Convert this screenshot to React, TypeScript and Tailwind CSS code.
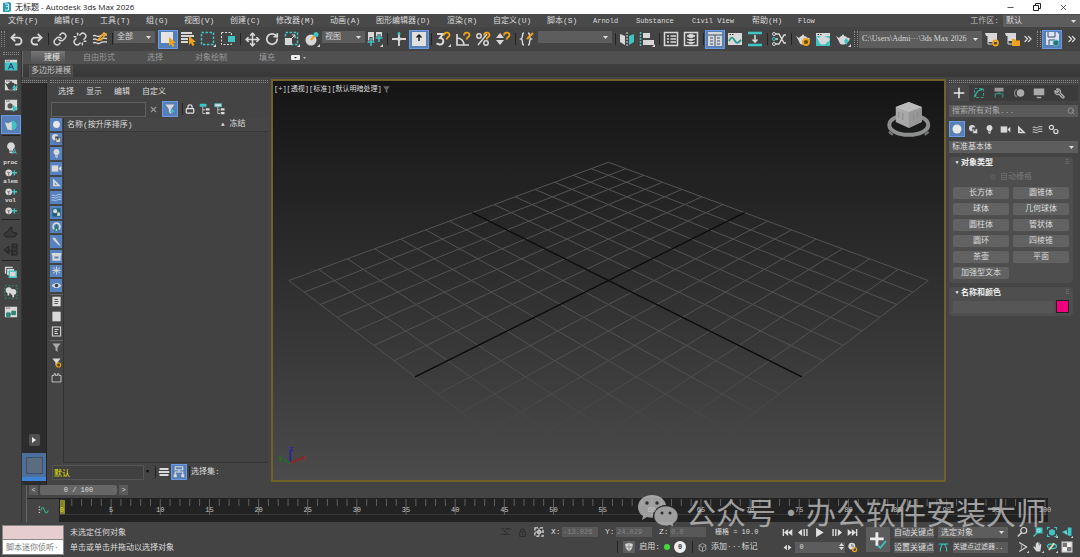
import { useState } from "react";
import type { ReactNode } from "react";
import {
  ChevronsRight,
  Link,
  Lock,
  Minus,
  Move,
  RotateCw,
  Search,
  Undo2,
  Redo2,
  Unlink,
  Wrench,
  X,
} from "lucide-react";
import clsx from "clsx";
import { twMerge } from "tailwind-merge";

const MENUS: [string, string][] = [
  ["文件(F)", "w-[46px]"],
  ["编辑(E)", "w-[46px]"],
  ["工具(T)", "w-[46px]"],
  ["组(G)", "w-[38px]"],
  ["视图(V)", "w-[46px]"],
  ["创建(C)", "w-[46px]"],
  ["修改器(M)", "w-[54px]"],
  ["动画(A)", "w-[46px]"],
  ["图形编辑器(D)", "w-[71px]"],
  ["渲染(R)", "w-[46px]"],
  ["自定义(U)", "w-[54px]"],
  ["脚本(S)", "w-[46px]"],
  ["Arnold", "w-[43px]"],
  ["Substance", "w-[56px]"],
  ["Civil View", "w-[60px]"],
  ["帮助(H)", "w-[46px]"],
  ["Flow", "w-[38px]"],
];

const PRIMITIVES = [
  "长方体", "圆锥体",
  "球体", "几何球体",
  "圆柱体", "管状体",
  "圆环", "四棱锥",
  "茶壶", "平面",
  "加强型文本",
];

const W = "#d8d8d8";
const T = "#3fc4c4";
const O = "#efa31d";

function Icon({ children, size = 16 }: { children: ReactNode; size?: number }) {
  return (
    <svg width={size} height={size} viewBox="0 0 16 16" fill="none" stroke="none" className="shrink-0" aria-hidden="true">
      {children}
    </svg>
  );
}

const Corner = () => <path d="M16 13v3h-3z" fill={W} />;
const Magnet = () => <path d="M9 4.5C9 1 14.5.5 14.5 4c0 2-2.5 2-3 4.5" stroke={O} strokeWidth="1.8" />;
const Teapot = ({ color = W }: { color?: string }) => (
  <path d="M1 5l3 2c1-1.5 2-2 3-2V3.800h2V5c2 0 3 1 3.500 2 2-.5 2.500.5 2 2s-2 2-2.500 2c-1 2-2 2.500-4 2.500S4.500 13 4 10.500z" fill={color} />
);
const Waves = ({ color = W }: { color?: string }) => (
  <path d="M1 5c3-2 4 2 7 0s4-1 7-1M1 8.500c3-2 4 2 7 0s4-1 7-1M1 12c3-2 4 2 7 0s4-1 7-1" stroke={color} strokeWidth="1.300" />
);
const Bulb = () => (
  <path d="M8 1.500a4.300 4.300 0 0 1 2.300 8V11H5.700V9.500a4.300 4.300 0 0 1 2.300-8zM6 12h4v1.500H9l-1 1-1-1H6z" fill={W} />
);
const Camera = () => (
  <>
    <rect x="1" y="3.500" width="9.500" height="9" fill={W} />
    <path d="M11 8l4-4v8.500z" fill={W} />
  </>
);
const Triangle = () => (
  <path d="M3 2v11.500h11.500zM5.500 8l3.300 3.300H5.500z" fill={W} fillRule="evenodd" />
);
const Shapes = () => (
  <>
    <circle cx="6" cy="6" r="4.500" fill={W} />
    <path d="M7 7h7v7H7z" fill={W} stroke="#444" />
    <path d="M6 6h4v4" stroke="#333" strokeWidth="1.500" />
  </>
);
const Window = () => (
  <>
    <path d="M1 2h14v12H1z" fill={W} />
    <path d="M2.500 3.500h1.500M5 3.500h1.500" stroke="#333" />
  </>
);
const Funnel = ({ color = W }: { color?: string }) => <path d="M2 2h12L9.500 8v6.500L6.500 12V8z" fill={color} />;

function ToolButton({
  label,
  active,
  children,
  className,
}: {
  label: string;
  active?: boolean;
  children: ReactNode;
  className?: string;
}) {
  return (
    <button
      type="button"
      aria-label={label}
      className={twMerge(
        "flex h-[19px] w-5 shrink-0 items-center justify-center border border-transparent",
        active && "border-[#6b9ae0] bg-[#5780b8]",
        className
      )}
    >
      {children}
    </button>
  );
}

function Sep() {
  return (
    <div className="flex h-3 w-1 shrink-0 justify-center">
      <div className="w-px bg-[#242424]" />
    </div>
  );
}

function Grip() {
  return <div className="mx-px h-4 w-1 shrink-0 border-x border-dotted border-[#888]" />;
}

function Select({ label, value, className }: { label: string; value: string; className?: string }) {
  return (
    <div className={clsx("relative flex shrink-0 bg-[#5d5d5d]", className)}>
      <select aria-label={label} defaultValue={value} className="w-full appearance-none truncate bg-transparent pr-2 pl-[3px] outline-none">
        <option>{value}</option>
      </select>
      <svg className="pointer-events-none absolute top-1/2 right-1 -mt-px" width="5" height="3" aria-hidden="true">
        <path d="M0 0h5L2.500 3z" fill="#ddd" />
      </svg>
    </div>
  );
}

function TitleBar() {
  return (
    <header className="flex h-[14px] shrink-0 items-center bg-white text-[#222]">
      <svg width="9" height="10" viewBox="0 0 9 10" className="ml-[2px]" aria-hidden="true">
        <path d="M1 1l6-1 2 1v8l-2 1H1z" fill="#2a9bb5" />
        <path d="M3 2h3.500v2.500H4M3 8h3.500V4.500" stroke="#d9f4f8" fill="none" />
      </svg>
      <h1 className="ml-1 font-['Open_Sans','Noto_Sans_CJK_SC',sans-serif] text-[8px]">无标题 - Autodesk 3ds Max 2026</h1>
      <div className="ml-auto flex items-center gap-[18px] pr-3">
        <button type="button" aria-label="最小化"><Minus size={9} strokeWidth={2} /></button>
        <button type="button" aria-label="还原">
          <svg width="8" height="8" fill="none" stroke="#222" aria-hidden="true">
            <path d="M.5 2.500h5v5h-5zM2.500 2V.5h5v5H6" />
          </svg>
        </button>
        <button type="button" aria-label="关闭"><X size={9} strokeWidth={2} /></button>
      </div>
    </header>
  );
}

function MenuBar() {
  return (
    <nav className="flex h-[13px] shrink-0 items-center bg-[#494949] pl-2">
      {MENUS.map(([name, width]) => (
        <button key={name} type="button" className={clsx("shrink-0 text-left whitespace-nowrap", width, /^[A-Z]/.test(name) && "text-[7px]")}>
          {name}
        </button>
      ))}
      <span className="ml-auto text-[#bbb]">工作区:</span>
      <Select label="工作区" value="默认" className="ml-1 h-3 w-[77px]" />
    </nav>
  );
}

function MainToolbar() {
  return (
    <div className="flex h-6 shrink-0 items-center bg-[#444] text-[#d8d8d8]">
      <Grip />
      <ToolButton label="撤消"><Undo2 size={15} strokeWidth={3} /></ToolButton>
      <ToolButton label="重做"><Redo2 size={15} strokeWidth={3} /></ToolButton>
      <Sep />
      <ToolButton label="链接"><Link size={14} strokeWidth={2.5} /></ToolButton>
      <ToolButton label="取消链接"><Unlink size={14} strokeWidth={2.5} /></ToolButton>
      <ToolButton label="绑定到空间扭曲">
        <Icon><Waves /><path d="M6 9l6-7 2 1-5 6z" stroke={O} strokeWidth="1.500" /></Icon>
      </ToolButton>
      <Sep />
      <Select label="选择过滤器" value="全部" className="h-3 w-[41px] self-start mt-1" />
      <ToolButton label="选择对象" active className="ml-[3px]">
        <Icon>
          <path d="M1 1h12v11H1z" fill="#e4e4e4" />
          <path d="M9 6v9l2-2 1.500 3 2-1L13 12h3z" fill={O} />
        </Icon>
      </ToolButton>
      <ToolButton label="按名称选择">
        <Icon>
          <path d="M1 2h11M1 5h13M1 8h7M1 11h7" stroke={W} strokeWidth="2" />
          <path d="M9 5v9l2-2 1.500 3 2-1L13 11h3z" fill={O} />
        </Icon>
      </ToolButton>
      <ToolButton label="矩形选择区域">
        <Icon><path d="M1.500 1.500h12v12h-12z" stroke={T} strokeWidth="1.500" strokeDasharray="2.500 1.500" /><Corner /></Icon>
      </ToolButton>
      <ToolButton label="窗口/交叉">
        <Icon><path d="M1.500 1.500h10v12h-10z" stroke={W} strokeDasharray="2 1.500" /><path d="M8 5h7v6H8z" fill={T} /></Icon>
      </ToolButton>
      <Sep />
      <ToolButton label="移动"><Move size={15} strokeWidth={2.5} /></ToolButton>
      <ToolButton label="旋转"><RotateCw size={14} strokeWidth={3} /></ToolButton>
      <ToolButton label="缩放">
        <Icon>
          <path d="M1.500 1.500h12v12h-12z" stroke={T} strokeWidth="1.500" strokeDasharray="2.500 1.500" />
          <path d="M1 7h7v7H1z" fill={W} />
          <path d="M8 7l3-3M8 4h3v3" stroke={W} />
          <Corner />
        </Icon>
      </ToolButton>
      <ToolButton label="放置">
        <Icon>
          <circle cx="7" cy="9" r="5.500" fill={W} />
          <path d="M7 9l5-6" stroke={O} strokeWidth="2" />
          <circle cx="12" cy="3.500" r="2.500" fill={T} />
          <Corner />
        </Icon>
      </ToolButton>
      <Select label="参考坐标系" value="视图" className="mt-1 h-3 w-[43px] self-start" />
      <ToolButton label="轴点中心">
        <Icon>
          <path d="M1 1h6v9H1zM9 1h6v7H9z" fill={W} />
          <path d="M4 6v9M0 11h8M12 3v8M8 7h8" stroke="#444" strokeWidth="3" />
          <path d="M4 7v8M.5 11h7M12 3v8M8.500 7h7" stroke={T} strokeWidth="1.500" />
          <Corner />
        </Icon>
      </ToolButton>
      <Sep />
      <ToolButton label="选择并操纵">
        <Icon><path d="M8 2v13M1 8h14" stroke={W} strokeWidth="1.800" /><circle cx="8" cy="2.500" r="1.500" fill={T} /><circle cx="8" cy="8" r="2" fill={W} /></Icon>
      </ToolButton>
      <ToolButton label="键盘快捷键覆盖" active>
        <Icon><path d="M1 1h14v14H1z" fill="#e0e0e0" /><path d="M8 4v6M5.500 6.500L8 4l2.500 2.500" stroke="#222" strokeWidth="1.500" /></Icon>
      </ToolButton>
      <Sep />
      <ToolButton label="捕捉开关">
        <Icon><path d="M2 3h6L5 7c5 0 4 7-.5 6.500L1.500 12.500" stroke={W} strokeWidth="2" /><Magnet /><Corner /></Icon>
      </ToolButton>
      <ToolButton label="角度捕捉">
        <Icon><path d="M2 3v11h12M2 7c4 0 7 3 7 7" stroke={W} strokeWidth="1.700" /><Magnet /></Icon>
      </ToolButton>
      <ToolButton label="百分比捕捉">
        <Icon><circle cx="4" cy="5" r="2.200" stroke={W} strokeWidth="1.500" /><circle cx="11" cy="12" r="2.200" stroke={W} strokeWidth="1.500" /><path d="M3 14L12 3" stroke={W} strokeWidth="1.500" /><Magnet /></Icon>
      </ToolButton>
      <ToolButton label="微调器捕捉">
        <Icon><path d="M5 2l4 5H1zM5 14l4-5H1z" fill={W} /><Magnet /></Icon>
      </ToolButton>
      <Sep />
      <ToolButton label="管理选择集">
        <Icon><path d="M5 2C2 2 5 7 2 8c3 1 0 6 3 6M9 2c3 0 0 5 3 6-3 1 0 6-3 6" stroke={W} strokeWidth="1.400" /><path d="M8 8l6-6" stroke={O} strokeWidth="2" /></Icon>
      </ToolButton>
      <Select label="命名选择集" value="" className="mx-px mt-1 h-3 w-[74px] self-start" />
      <Sep />
      <ToolButton label="镜像">
        <Icon><path d="M1 3l5 2v9l-5-3z" fill={W} /><path d="M15 3l-5 2v9l5-3z" fill={T} /><path d="M8 1v14" stroke={W} strokeDasharray="2 1" /></Icon>
      </ToolButton>
      <ToolButton label="对齐">
        <Icon><path d="M1.500 1v14" stroke={T} strokeWidth="1.500" strokeDasharray="2 1" /><path d="M4 2h7v5H4zM4 9h11v5H4z" fill={W} /><Corner /></Icon>
      </ToolButton>
      <Sep />
      <ToolButton label="场景资源管理器">
        <Icon><path d="M1.500 1.500h13v13h-13z" stroke={W} strokeWidth="1.500" /><path d="M4 5h2M7.500 5H13M4 8h2M7.500 8H13M4 11h2M7.500 11H13" stroke={W} strokeWidth="1.500" /></Icon>
      </ToolButton>
      <ToolButton label="层资源管理器">
        <Icon><path d="M1.500 1.500h13v13h-13z" stroke={W} strokeWidth="1.500" /><path d="M4 5l4-2 4 2-4 2zM4 8l4 2 4-2M4 11l4 2 4-2" fill={W} stroke={W} /></Icon>
      </ToolButton>
      <Sep />
      <ToolButton label="功能区" active>
        <Icon><path d="M1 1h14v14H1z" fill={W} /><path d="M1 4h14M8 4v11M3 7h3M10 7h3M3 10h3M10 10h3M3 13h3M10 13h3" stroke="#3b5173" /></Icon>
      </ToolButton>
      <ToolButton label="曲线编辑器">
        <Icon><Window /><path d="M2 10c3-6 4-3 6 0s3 2 6-1" stroke="#2c9a86" strokeWidth="1.800" /></Icon>
      </ToolButton>
      <ToolButton label="图解视图">
        <Icon><path d="M1 2h14M1 14h14" stroke={T} strokeWidth="2.500" /><path d="M8 4v7M5.500 8.500L8 11l2.500-2.500" stroke={W} strokeWidth="1.600" /></Icon>
      </ToolButton>
      <Sep />
      <ToolButton label="材质编辑器">
        <Icon><path d="M4 3h4l5 9h2M4 8h3M4 13h4l5-9h2" stroke={W} strokeWidth="1.400" /><circle cx="3" cy="3" r="1.500" stroke={W} /><circle cx="3" cy="8" r="1.500" stroke={T} /><circle cx="3" cy="13" r="1.500" stroke={W} /></Icon>
      </ToolButton>
      <Sep />
      <ToolButton label="渲染设置">
        <Icon><Teapot /><circle cx="11" cy="11" r="3" fill="#6b4a10" stroke={O} strokeWidth="1.800" /></Icon>
      </ToolButton>
      <ToolButton label="渲染帧窗口"><Icon><Window /><path d="M1 5h14v10H1z" fill={T} /><Teapot /></Icon></ToolButton>
      <ToolButton label="渲染产品"><Icon><Teapot /><path d="M11 7l3 3-3 4-2-4z" fill={T} /><Corner /></Icon></ToolButton>
      <Grip />
      <Select label="项目文件夹" value="C:\Users\Admi···\3ds Max 2026" className="h-[17px] w-[123px] font-['Liberation_Serif',serif]" />
      <ToolButton label="设置项目">
        <Icon><path d="M1 2h12v9H4V5H2z" fill={W} /><path d="M4 4v9h4" stroke={W} /><circle cx="11.500" cy="12" r="2.500" stroke={O} strokeWidth="1.800" /></Icon>
      </ToolButton>
      <ToolButton label="打开项目">
        <Icon><path d="M1 2h11v8H4V5H2z" fill={W} /><path d="M4 4v9h4" stroke={W} /><path d="M8 8h3l1 1.500h4V15H8z" fill={O} /></Icon>
      </ToolButton>
      <button type="button" aria-label="更多" className="w-[14px]"><ChevronsRight size={12} strokeWidth={2.500} /></button>
      <Grip />
      <ToolButton label="自动备份" active>
        <Icon><path d="M2 1h11l2 2v11H2z" fill="#dde4ee" /><path d="M4 1v5h7V1M5 14V9h6" stroke="#3b5173" /><circle cx="12" cy="12" r="3" fill="#3a6f7c" stroke={T} /></Icon>
      </ToolButton>
      <button type="button" aria-label="更多工具" className="ml-auto w-[14px]"><ChevronsRight size={12} strokeWidth={2.500} /></button>
    </div>
  );
}

function LeftToolbar() {
  return (
    <aside className="flex w-[22px] shrink-0 flex-col items-center border-r border-[#333] bg-[#444] pt-px">
      <div className="h-[3px] w-4 border-y border-dotted border-[#888]" />
      <div className="flex flex-col gap-px">
        <ToolButton label="Arnold"><Icon size={14}><Window /><path d="M1 5h14v9H1z" fill={T} /><path d="M5 13l3-7 3 7M6 10.500h4" stroke="#226" /></Icon></ToolButton>
        <ToolButton label="渲染视图"><Icon size={14}><Window /><Teapot color="#444" /><path d="M12 7l-3 5h3l-1 4 5-6h-3z" fill={T} /></Icon></ToolButton>
        <ToolButton label="交互渲染"><Icon size={14}><Window /><circle cx="7" cy="9" r="3" fill="#555" /><path d="M10 8l6 4-6 4z" fill={T} /></Icon></ToolButton>
        <ToolButton label="茶壶" active><Icon size={14}><path d="M1 5l4 1 4-2v10l-5-1z" fill={W} /><path d="M9 3a5 5 0 0 1 0 11z" fill={T} /></Icon></ToolButton>
      </div>
      <div className="my-px h-px w-[18px] bg-[#222]" />
      <div className="flex flex-col items-center text-[6px] leading-[7px] font-bold text-[#ddd]">
        <ToolButton label="灯光" className="h-[22px]"><Icon size={14}><Bulb /><path d="M10 15l2-6 2 6M10.500 13h3" stroke={T} /></Icon></ToolButton>
        {["proc", "alem", "vol"].map((name) => (
          <button key={name} type="button" className="flex h-[19px] flex-col items-center">
            {name}
            <Icon size={12}><circle cx="5" cy="9" r="4.500" fill={W} /><path d="M3 8l2 1 2-1M5 9v4" stroke="#555" /><path d="M9 9h7M12.500 5.500v7" stroke={T} strokeWidth="1.800" /></Icon>
          </button>
        ))}
      </div>
      <div className="mt-[3px] mb-px h-px w-[18px] bg-[#222]" />
      <ToolButton label="流体"><Icon><path d="M1 11c2-3 4-1 5-4s3-4 3-2-2 5 5 5l-2 4H3z" fill="#383838" stroke="#242424" /></Icon></ToolButton>
      <ToolButton label="体素"><Icon><path d="M1 8l5-4v8zM9 2h5v11H9zM4 9h9M9 5h5M9 9v5" fill="#383838" stroke="#242424" /></Icon></ToolButton>
      <div className="my-px h-px w-[18px] bg-[#222]" />
      <div className="flex flex-col gap-px">
        <ToolButton label="批量渲染"><Icon size={14}><path d="M1 2h9v8H1z" fill={W} /><path d="M3 4h9v8H3z" fill={W} stroke="#444" /><path d="M6 7h8v7H6z" fill={W} stroke={T} strokeWidth="1.500" /></Icon></ToolButton>
        <ToolButton label="灯光列表"><Icon size={14}><path d="M1 1h14v14H1z" stroke="#349a8a" strokeDasharray="2 2" /><circle cx="5.500" cy="6" r="3.500" fill={W} /><circle cx="10.500" cy="8" r="3.500" fill={W} /><path d="M5 8v4M10.500 10v4" stroke={W} strokeWidth="2" /></Icon></ToolButton>
        <ToolButton label="节点编辑器"><Icon size={14}><Window /><path d="M3 9h4v4H3zM9 7h4v4H9zM7 11l2-2" fill="#2a8f80" stroke="#267468" /></Icon></ToolButton>
      </div>
    </aside>
  );
}

function Ribbon() {
  return (
    <section className="shrink-0 border-l border-[#666] bg-[#3a3a3a]">
      <div className="flex h-[13px] items-center bg-[#505050] pl-2 text-[#9a9a9a]">
        <button type="button" className="h-full w-[34px] bg-linear-to-b from-[#777] to-[#505050] pl-2 text-[#e4e4e4]">建模</button>
        <button type="button" className="ml-[18px]">自由形式</button>
        <button type="button" className="ml-8">选择</button>
        <button type="button" className="ml-8">对象绘制</button>
        <button type="button" className="ml-8">填充</button>
        <button type="button" aria-label="最小化功能区" className="ml-4 flex items-center gap-1">
          <svg width="15" height="5" aria-hidden="true">
            <rect width="9" height="5" rx="1" fill="#eee" />
            <path d="M3 2h3L4.500 3.500z" fill="#333" />
            <path d="M12 2h3l-1.500 2z" fill="#bbb" />
          </svg>
        </button>
      </div>
      <div className="flex h-[13px] items-center bg-linear-to-b from-[#404040] to-[#383838] pl-[6px]">
        <button type="button" className="h-3 border border-[#505050] bg-[#484848] px-px leading-[10px] text-[#c4c4c4]">多边形建模</button>
      </div>
    </section>
  );
}

const FILTERS: [string, ReactNode][] = [
  ["几何体", <circle cx="8" cy="8" r="5" fill="#e8e8e8" />],
  ["图形", <Shapes />],
  ["灯光", <Bulb />],
  ["摄影机", <Camera />],
  ["辅助对象", <Triangle />],
  ["空间扭曲", <Waves color="#b8cde8" />],
  ["组", <><path d="M2 2h12v12H2z" fill="#1f6175" /><circle cx="6" cy="6" r="3" fill={W} /><path d="M9 8h4v5H9z" fill={W} /></>],
  ["外部参照", <><circle cx="8" cy="8" r="5" stroke={W} strokeWidth="2.500" /><path d="M5 15l3-8 3 8" stroke="#1f7a70" strokeWidth="2" /></>],
  ["骨骼", <path d="M2 2l4 1 8 11-3-1-7-7z" fill={W} />],
  ["容器", <path d="M1 3h14v3h-1v8H2V6H1zM5 8v3h6V8z" fill={W} fillRule="evenodd" />],
  ["冻结", <path d="M8 2v12M3 4l10 8M3 12l10-8M2 8h12" stroke={W} strokeWidth="1.300" />],
  ["隐藏", <><path d="M1 8c4-5 10-5 14 0-4 5-10 5-14 0z" fill={W} /><circle cx="8" cy="8" r="2.500" fill="#345" /></>],
];

function SceneExplorer() {
  const [query, setQuery] = useState("");

  return (
    <section className="flex w-[224px] shrink-0 flex-col bg-[#444] px-[3px] pt-[3px]">
      <div className="h-[3px] shrink-0 border-y border-dotted border-[#888]" />
      <div className="flex h-[18px] shrink-0 items-center gap-3 pl-2">
        {["选择", "显示", "编辑", "自定义"].map((item) => (
          <button key={item} type="button">{item}</button>
        ))}
      </div>
      <div className="flex h-4 shrink-0 items-center">
        <input
          aria-label="搜索场景"
          value={query}
          onChange={(e) => setQuery(e.target.value)}
          className="ml-px h-[15px] w-[95px] border border-[#606060] bg-[#404040] px-1 outline-none"
        />
        <button type="button" aria-label="清除" className="ml-[3px] text-[#999]" onClick={() => setQuery("")}><X size={9} strokeWidth={3} /></button>
        <ToolButton label="过滤器" active className="mr-[2px] ml-1 h-4 w-4"><Icon size={12}><Funnel /><path d="M11 8v6M8 11h6" stroke={T} strokeWidth="1.500" /></Icon></ToolButton>
        <Sep />
        <div className="flex items-center gap-[3px] text-[#ddd]">
          <button type="button" aria-label="锁定" className="flex w-3 justify-center"><Lock size={10} strokeWidth={3} /></button>
          <button type="button" aria-label="显示子级"><Icon size={12}><path d="M1 1h9v4H1z" fill={T} /><path d="M5 5v9h3M5 9h3" stroke={W} /><path d="M9 7h5v3H9zM9 12h5v3H9z" fill={W} /></Icon></button>
          <button type="button" aria-label="显示相关"><Icon size={12}><path d="M1 1h9v4H1z" fill={W} stroke={T} /><path d="M5 5v9h3M5 9h3" stroke={W} /><path d="M9 7h5v3H9zM9 12h5v3H9z" fill={W} /></Icon></button>
        </div>
      </div>
      <div className="mt-px flex min-h-0 flex-1">
        <div className="flex w-[14px] shrink-0 flex-col items-center border-r border-[#333]">
          <div className="grid h-[174px] w-full auto-rows-fr gap-[2px] pr-px">
            {FILTERS.map(([name, icon]) => (
              <button key={name} type="button" aria-label={name} className="flex items-center justify-center overflow-hidden bg-[#5682bf]">
                <Icon size={11}>{icon}</Icon>
              </button>
            ))}
          </div>
          <div className="mt-[2px] h-px w-full bg-[#666]" />
          <div className="flex flex-col gap-1 pt-px pb-[3px]">
            <button type="button" aria-label="全部选择"><Icon size={11}><path d="M2 1h12v14H2z" fill={W} /><path d="M5 5h5M5 8h6M5 11h5" stroke="#555" strokeWidth="1.500" /></Icon></button>
            <button type="button" aria-label="全部不选"><Icon size={11}><path d="M2 1h12v14H2z" fill={W} /></Icon></button>
            <button type="button" aria-label="反选"><Icon size={11}><path d="M2 1.500h12v13H2z" stroke={W} strokeWidth="1.500" /><path d="M5 5h6M5 8h4M5 11h5" stroke={W} strokeWidth="1.500" /></Icon></button>
          </div>
          <div className="h-px w-full bg-[#666]" />
          <div className="flex flex-col gap-1 pt-px">
            <button type="button" aria-label="过滤"><Icon size={11}><Funnel color="#aaa" /></Icon></button>
            <button type="button" aria-label="高级过滤"><Icon size={11}><Funnel /><circle cx="11" cy="11.500" r="3" fill="#5c4b10" stroke={O} strokeWidth="1.500" /></Icon></button>
            <button type="button" aria-label="工具箱"><Icon size={11}><path d="M1.500 14.500V5h3V2.500h2V5h3V2.500h2V5h3v9.500z" stroke={W} strokeWidth="1.200" /></Icon></button>
          </div>
        </div>
        <div className="min-w-0 flex-1 border-b border-[#353535] bg-[#424242]">
          <table className="w-full table-fixed border-b border-[#383838] bg-[#464646]">
            <thead>
              <tr className="h-3 text-left">
                <th className="pl-[3px] font-normal">名称(按升序排序)</th>
                <th className="w-[47px] font-normal"><span className="text-[6px]">▲</span> 冻结</th>
              </tr>
            </thead>
          </table>
        </div>
      </div>
      <div className="flex h-[22px] shrink-0 items-center pb-1 pl-[2px]">
        <input aria-label="层" defaultValue="默认" className="h-[15px] w-[92px] border border-[#565656] bg-[#404040] px-px text-[#e6e600] outline-none" />
        <button type="button" aria-label="展开" className="mr-1 ml-[2px] text-[5px] text-black">▼</button>
        <Sep />
        <button type="button" aria-label="层" className="mx-px"><Icon size={12}><path d="M2 4h12M1 8h14M2 12h12" stroke={W} strokeWidth="2.500" /></Icon></button>
        <ToolButton label="层级" active className="h-4 w-4"><Icon size={12}><path d="M3 1h10v4H3zM8 5v4M3 12V8h10v4" stroke={W} strokeWidth="1.500" /><path d="M1 11h4v4H1zM11 11h4v4h-4z" fill={W} /></Icon></ToolButton>
        <Sep />
        <span>选择集:</span>
      </div>
    </section>
  );
}

const HALF = 7;
const project = (u: number, v: number) => {
  const depth = u + v;
  const w = 1 - 0.0248 * depth;
  return [335 + (22.89 * (u - v)) / w, 200 + (11.4 * depth) / w];
};
const segment = (a: number[], b: number[]) =>
  `M${a[0].toFixed(1)} ${a[1].toFixed(1)}L${b[0].toFixed(1)} ${b[1].toFixed(1)}`;

const steps = Array.from({ length: HALF * 2 + 1 }, (_, i) => i - HALF);
const gridPath = steps
  .map((n) => segment(project(n, -HALF), project(n, HALF)) + segment(project(-HALF, n), project(HALF, n)))
  .join("");
const axisPath = segment(project(0, -HALF), project(0, HALF)) + segment(project(-HALF, 0), project(HALF, 0));

function Viewport() {
  return (
    <section className="relative mt-[2px] mb-[3px] min-w-0 flex-1 border-2 border-[#6f6128] bg-linear-to-b from-[#151515] to-[#4b4b4b]">
      <svg viewBox="0 0 670 400" className="absolute inset-0 h-full w-full" aria-hidden="true">
        <defs>
          <linearGradient id="gridFade" gradientUnits="userSpaceOnUse" x1="0" y1="80" x2="0" y2="370">
            <stop offset="0" stopColor="#545454" />
            <stop offset="0.65" stopColor="#505050" />
            <stop offset="0.85" stopColor="#484848" />
            <stop offset="1" stopColor="#484848" stopOpacity="0" />
          </linearGradient>
        </defs>
        <path d={gridPath} stroke="url(#gridFade)" />
        <path d={axisPath} stroke="#080808" strokeWidth="1.300" />
        <g fontSize="8" fontFamily="Liberation Sans" fontWeight="bold">
          <path d="M16 383V370" stroke="#2222b0" strokeWidth="1.500" />
          <path d="M16 383l11-5" stroke="#a02020" strokeWidth="1.500" />
          <path d="M16 383l-7-4" stroke="#1c761c" strokeWidth="1.500" />
          <text x="15" y="371" fill="#2222b0">z</text>
          <text x="27" y="380" fill="#a02020">x</text>
          <text x="4" y="380" fill="#1c761c">y</text>
        </g>
        <g>
          <ellipse cx="636" cy="44" rx="19.500" ry="10" fill="none" stroke="#8d8f8f" strokeWidth="4" />
          <path d="M636 21l13 5v15l-13 6-13-6V26z" fill="#a8a8a8" />
          <path d="M636 31l13-5v15l-13 6z" fill="#979797" />
          <path d="M636 31l-13-5 13-5 13 5z" fill="#bbb" />
          <path d="M626 31v6M630 32v7M641 33v6M645 31v6" stroke="#888" />
          <path d="M616 51l4 3M656 51l-4 3" stroke="#777" strokeWidth="2" />
        </g>
      </svg>
      <div className="relative flex items-center pt-px pl-px text-[7px] leading-[14px]">
        <button type="button">[+]</button>
        <button type="button">[透视]</button>
        <button type="button">[标准]</button>
        <button type="button">[默认明暗处理]</button>
        <button type="button" aria-label="视口过滤器"><Icon size={9}><Funnel color="#666" /></Icon></button>
      </div>
    </section>
  );
}

function RolloutHeader({ title }: { title: string }) {
  return (
    <button type="button" className="flex h-3 w-full items-center px-1 font-bold text-[#eee]">
      <span className="w-2 text-[5px]">▼</span>
      {title}
      <span className="ml-auto text-[6px] font-normal text-[#888]">⠿</span>
    </button>
  );
}

function CommandPanel() {
  return (
    <aside className="flex w-[134px] shrink-0 flex-col bg-[#444] pt-[3px] pr-[2px] pl-[3px]">
      <div className="h-[3px] border-y border-dotted border-[#888]" />
      <div className="mt-[2px] flex h-4 items-center bg-[#3b3b3b] text-[#aaa]">
        <ToolButton label="创建" className="h-4 bg-[#484848]"><Icon size={12}><path d="M8 1v14M1 8h14" stroke="#e8e8e8" strokeWidth="2" /></Icon></ToolButton>
        <ToolButton label="修改"><Icon size={12}><path d="M2 2h12v12H2z" stroke="#39947f" strokeWidth="1.500" strokeDasharray="4 2" /><path d="M3 13c1-7 4-9 10-10" stroke="#39b5a0" strokeWidth="2" /></Icon></ToolButton>
        <ToolButton label="层次"><Icon size={12}><path d="M2 1h12v5H2z" fill="#999" /><path d="M3 14V9h10v5M8 6v3" stroke="#39947f" strokeWidth="1.500" /></Icon></ToolButton>
        <ToolButton label="运动"><Icon size={12}><circle cx="10" cy="8" r="5" fill="#aaa" /><path d="M5 3C1 5 1 11 5 13" stroke="#888" strokeWidth="1.500" /></Icon></ToolButton>
        <ToolButton label="显示"><Icon size={12}><path d="M1 2h14v9H1zM5 13h6v2H5z" fill="#aaa" /></Icon></ToolButton>
        <ToolButton label="实用程序"><Wrench size={11} strokeWidth={3} className="-scale-x-100" /></ToolButton>
      </div>
      <div className="mt-1 flex h-3 items-center bg-[#5a5a5a] pr-[3px] text-[#aaa]">
        <input aria-label="搜索所有对象" placeholder="搜索所有对象..." className="min-w-0 flex-1 bg-transparent pl-[3px] outline-none placeholder:text-[#aaa]" />
        <Search size={8} />
      </div>
      <div className="mt-1 flex h-4 items-center">
        <ToolButton label="几何体" active className="h-4 w-4"><Icon size={12}><circle cx="8" cy="8" r="6" fill="#e8e8e8" /></Icon></ToolButton>
        <ToolButton label="图形" className="w-4"><Icon size={11}><Shapes /></Icon></ToolButton>
        <ToolButton label="灯光" className="w-4"><Icon size={11}><Bulb /></Icon></ToolButton>
        <ToolButton label="摄影机" className="w-4"><Icon size={11}><Camera /></Icon></ToolButton>
        <ToolButton label="辅助对象" className="w-4"><Icon size={11}><Triangle /></Icon></ToolButton>
        <ToolButton label="空间扭曲" className="w-4"><Icon size={11}><Waves /></Icon></ToolButton>
        <ToolButton label="系统" className="w-4"><Icon size={11}><circle cx="5" cy="5" r="3" stroke={W} strokeWidth="1.800" /><circle cx="11.500" cy="11" r="3" stroke={W} strokeWidth="1.800" /></Icon></ToolButton>
      </div>
      <Select label="类别" value="标准基本体" className="mt-1 h-3" />
      <div className="mt-1 mr-[5px] rounded-sm bg-[#4e4e4e] pb-1">
        <RolloutHeader title="对象类型" />
        <label className="flex h-4 items-center justify-center gap-1 text-[#777]">
          <input type="checkbox" disabled className="size-[6px] appearance-none rounded-sm bg-[#585858]" />
          自动栅格
        </label>
        <div className="mt-[2px] grid grid-cols-2 gap-1 px-1">
          {PRIMITIVES.map((name) => (
            <button key={name} type="button" className="h-3 rounded-xs bg-[#626262] leading-3">{name}</button>
          ))}
        </div>
      </div>
      <div className="mt-1 mr-[5px] rounded-sm bg-[#4e4e4e] pb-[3px]">
        <RolloutHeader title="名称和颜色" />
        <div className="mt-px flex items-center justify-between px-1">
          <input aria-label="名称" disabled className="h-3 w-[101px] bg-[#565656] px-1" />
          <button type="button" aria-label="对象颜色" className="size-[13px] border border-[#222] bg-[#f0007f]" />
        </div>
      </div>
    </aside>
  );
}

const frames = Array.from({ length: 101 }, (_, i) => i);
const frameX = (frame: number) => `${0.3 + frame * 0.994}%`;

function Timeline() {
  return (
    <section className="mr-8 ml-1 shrink-0 border-l border-[#666]">
      <div className="flex h-[13px] items-start gap-[2px] pl-[2px] text-[7px]">
        <button type="button" className="h-[10px] w-[9px] bg-[#5a5a5a] leading-[10px]">&lt;</button>
        <button type="button" className="h-[10px] w-[77px] rounded-xs bg-[#666] leading-[10px]">0 / 100</button>
        <button type="button" className="h-[10px] w-[9px] bg-[#5a5a5a] leading-[10px]">&gt;</button>
      </div>
      <div className="flex h-6">
        <button type="button" aria-label="迷你曲线编辑器" className="flex w-8 items-center justify-center border-t border-[#222]">
          <Icon size={11}><path d="M1 3h2M1 7h2M1 11h2" stroke={W} strokeWidth="1.500" /><path d="M4 8c3-8 4-3 6 1s3 3 5-1" stroke="#35b592" strokeWidth="1.500" /></Icon>
        </button>
        <svg className="h-full min-w-0 flex-1 overflow-visible bg-[#222]" aria-hidden="true">
          <rect x="1" y="2" width="5" height="15" fill="#8d8a18" />
          <line x1="0" x2="100%" y1="16.500" y2="16.500" stroke="#383838" />
          {frames.map((f) => (
            <line key={f} x1={frameX(f)} x2={frameX(f)} y1="1" y2={f % 5 === 0 ? 17 : 8} stroke="#707070" strokeWidth="0.800" />
          ))}
          {frames.filter((f) => f % 5 === 0).map((f) => (
            <text key={f} x={frameX(f)} y="14" textAnchor="middle" fontSize="7" fill={f === 0 ? "#e0d840" : "#c2c2c2"}>{f}</text>
          ))}
        </svg>
      </div>
    </section>
  );
}

function Coordinate({ axis, value }: { axis: string; value: string }) {
  return (
    <label className="flex items-center gap-px">
      <span className="w-[10px]">{axis}:</span>
      <input defaultValue={value} className="h-[10px] w-9 bg-[#585858] px-px text-[7px] text-[#858585] outline-none" />
    </label>
  );
}

const PLAYBACK: [string, string][] = [
  ["转至开头", "M1 3h2v10H1zM9 3v10L3 8zM15 3v10L9 8z"],
  ["上一帧", "M6 3v10L0 8zM8 3h2v10H8zM12 3h2v10h-2z"],
  ["播放", "M3 1l11 7-11 7z"],
  ["下一帧", "M10 3v10l6-5zM2 3h2v10H2zM6 3h2v10H6z"],
  ["转至结尾", "M13 3h2v10h-2zM1 3v10l6-5zM7 3v10l6-5z"],
];

function StatusBar() {
  return (
    <footer className="flex h-[35px] shrink-0 items-center bg-[#444]">
      <div className="ml-[2px] flex h-[30px] w-[62px] shrink-0 flex-col border border-[#888] text-[#777]">
        <input aria-label="宏录制器" className="h-[13px] bg-[#e6cdd0] outline-none" />
        <input aria-label="脚本侦听器" defaultValue="脚本迷你侦听·" className="h-[15px] border-t border-[#888] bg-white pl-[3px] outline-none" />
      </div>
      <div className="ml-[6px] leading-[15px]">
        <p>未选定任何对象</p>
        <p>单击或单击并拖动以选择对象</p>
      </div>

      <div className="ml-auto flex flex-col items-end gap-[3px]">
        <div className="flex h-3 items-center gap-[7px]">
          <button type="button" aria-label="孤立"><Icon size={10}><path d="M1 3h4M7 3h7M1 12h13M4 6l6 4" stroke="#292929" strokeWidth="1.800" strokeDasharray="3 1" /></Icon></button>
          <button type="button" aria-label="锁定选择"><Icon size={9}><path d="M3 7h10v8H3zM5 7V2h6v5M8 9v4" stroke="#292929" strokeWidth="1.500" /></Icon></button>
          <button type="button" aria-label="绝对变换"><Icon size={10}><path d="M1.500 1.500h13v13h-13z" stroke={W} strokeWidth="2" strokeDasharray="5 3" /><path d="M8 2v12M2 8h12" stroke={W} strokeWidth="1.500" /><circle cx="8" cy="8" r="3" stroke={W} strokeWidth="1.500" /></Icon></button>
          <Coordinate axis="X" value="-13.026" />
          <Coordinate axis="Y" value="24.029" />
          <Coordinate axis="Z" value="0.0" />
          <span className="w-[50px] pl-[2px] text-[7px] whitespace-nowrap">栅格 = 10.0</span>
        </div>
        <div className="flex h-3 items-center gap-1">
          <Sep />
          <button type="button" aria-label="安全" className="flex size-3 items-center justify-center bg-[#5e5e5e]"><Icon size={10}><path d="M2 3l6-2 6 2c0 6-2 9-6 12-4-3-6-6-6-12z" fill={W} /><path d="M8 1v14M2 8h12" stroke="#666" /></Icon></button>
          <span>启用:</span>
          <span className="size-[6px] rounded-full bg-[#3edc3e]" />
          <button type="button" className="flex size-3 items-center justify-center rounded-full border-2 border-[#eee] bg-[#eee] text-[7px] font-bold text-[#333]">0</button>
          <Sep />
          <button type="button" aria-label="标记"><Icon size={9}><path d="M8 1l6 3v8l-6 3-6-3V4zM2 4l6 4 6-4M8 8v7" stroke="#bbb" strokeWidth="1.300" /></Icon></button>
          <button type="button" className="w-[52px] text-left">添加···标记</button>
        </div>
      </div>

      <div className="ml-4 grid w-[82px] shrink-0 grid-cols-5 place-items-center gap-y-[3px]">
        {PLAYBACK.map(([name, d]) => (
          <button key={name} type="button" aria-label={name} className="h-3"><Icon size={11}><path d={d} fill="#e0e0e0" /></Icon></button>
        ))}
        <button type="button" aria-label="关键点模式"><Icon size={9}><path d="M7 3v10L1 8zM9 3v10l6-5z" fill="#ddd" /></Icon></button>
        <div className="relative col-span-3 w-full">
          <input aria-label="当前帧" defaultValue="0" className="h-[11px] w-full bg-[#5c5c5c] pl-1 text-[7px] outline-none" />
          <svg className="pointer-events-none absolute top-[2px] right-px" width="5" height="7" aria-hidden="true"><path d="M0 3h5L2.500 0zM0 4h5L2.500 7z" fill="#ddd" /></svg>
        </div>
        <button type="button" aria-label="时间配置"><Icon size={11}><circle cx="7" cy="6" r="5" fill={W} /><path d="M7 3v3h3" stroke="#444" /><circle cx="11" cy="11" r="3" stroke={O} strokeWidth="1.800" /></Icon></button>
      </div>

      <button type="button" aria-label="设置关键点" className="ml-[5px] flex h-[25px] w-6 shrink-0 items-center justify-center bg-[#5c5c5c]">
        <Icon size={18}><path d="M7 1v12M1 7h12" stroke="#ececec" strokeWidth="2.500" /><path d="M8 13l2 2 5-6" stroke={T} strokeWidth="1.500" /></Icon>
      </button>
      <div className="ml-1 flex w-[114px] shrink-0 flex-col gap-[3px]">
        <div className="flex h-3 items-center justify-between">
          <button type="button" className="h-[11px] w-10 bg-[#5a5a5a] leading-[11px] whitespace-nowrap">自动关键点</button>
          <Select label="选择集" value="选定对象" className="h-[11px] w-[70px]" />
        </div>
        <div className="flex h-3 items-center">
          <button type="button" className="h-[11px] w-10 bg-[#5a5a5a] leading-[11px] whitespace-nowrap">设置关键点</button>
          <button type="button" aria-label="切线" className="ml-1"><Icon size={11}><path d="M3 14C4 5 6 3 8 3s4 2 5 11M1 3h14" stroke={T} strokeWidth="1.500" /></Icon></button>
          <button type="button" className="ml-auto h-[11px] w-[55px] bg-[#5a5a5a] text-left text-[7px] leading-[11px] whitespace-nowrap">关键点过滤器..</button>
        </div>
      </div>

      <div className="mr-[6px] ml-2 grid w-[58px] shrink-0 grid-cols-4 place-items-center gap-y-[3px]">
        <button type="button" aria-label="缩放"><Icon size={12}><circle cx="9" cy="6" r="4" stroke={W} strokeWidth="1.600" /><path d="M6 9l-5 5" stroke={W} strokeWidth="2" /></Icon></button>
        <button type="button" aria-label="缩放所有"><Icon size={12}><path d="M5 2h9v8H5z" fill={T} /><circle cx="9" cy="6" r="2" stroke="#e8e8e8" /><path d="M7 9l-5 5" stroke={T} strokeWidth="2" /></Icon></button>
        <button type="button" aria-label="最大化显示"><Icon size={12}><path d="M2 5V2h3M11 2h3v3M14 11v3h-3M5 14H2v-3" stroke={T} strokeWidth="1.500" /><path d="M4 6l4-2 4 2v5l-4 2-4-2z" fill={T} /><Corner /></Icon></button>
        <button type="button" aria-label="所有视图最大化"><Icon size={12}><path d="M1 8l7-3v7zM9 2h5v11H9z" fill={T} /><path d="M5 7l4 4" stroke={W} /><Corner /></Icon></button>
        <button type="button" aria-label="视野"><Icon size={12}><path d="M3 2l10 6-10 6" stroke={W} strokeWidth="1.500" /><path d="M5 5c2 2 2 4 0 6" stroke={W} /><Corner /></Icon></button>
        <button type="button" aria-label="平移"><Icon size={12}><path d="M3 7l2 2V3h1.500v4V1.500H8V7l.5-5H10v5l1-3 1.500.5L11 14H6L1.500 8z" fill={W} /><Corner /></Icon></button>
        <button type="button" aria-label="环绕"><Icon size={12}><ellipse cx="8" cy="7" rx="6" ry="3" stroke={T} strokeWidth="1.800" /><path d="M4 12l7-9" stroke="#e5ddb0" strokeWidth="2.500" /><Corner /></Icon></button>
        <button type="button" aria-label="最大化视口"><Icon size={12}><path d="M1.500 1.500h13v13h-13z" fill="#777" stroke={W} strokeWidth="1.500" /><path d="M2 8h6v6H2zM8 2h6v6H8z" fill="#eee" /></Icon></button>
      </div>
    </footer>
  );
}

function Watermark() {
  return (
    <div className="pointer-events-none absolute right-[34px] bottom-[22px] flex items-center text-[#c6c6c6] opacity-75">
      <svg width="40" height="34" viewBox="0 0 40 34" className="mr-2" aria-hidden="true">
        <path d="M14 1C6 1 0 6 0 13c0 4 2 7 5 9l-1 4 5-3c2 .6 4 1 6 .8C14 17 20 11 28 11 27 5 21 1 14 1z" fill="currentColor" />
        <path d="M28 12c-7 0-12 4.500-12 10s5 10 12 10c1.500 0 3-.3 4-.7l4 2.200-1-3.500c3-2 5-4.800 5-8 0-5.500-5.500-10-12-10z" fill="currentColor" stroke="#333" strokeWidth="0.700" />
        <g fill="#333"><circle cx="9" cy="9" r="1.700" /><circle cx="19" cy="9" r="1.700" /><circle cx="24" cy="19" r="1.500" /><circle cx="32" cy="19" r="1.500" /></g>
      </svg>
      <span className="font-['Noto_Sans_CJK_SC',sans-serif] text-[30px] leading-[48px] whitespace-nowrap">
        公众号・办公软件安装大师
      </span>
    </div>
  );
}

export default function App() {
  return (
    <div
      lang="zh-CN"
      className="relative flex h-screen w-full flex-col overflow-hidden bg-[#444] font-['Liberation_Mono','Noto_Sans_CJK_SC',monospace] text-[8px] leading-3 text-[#dcdcdc]"
    >
      <TitleBar />
      <MenuBar />
      <MainToolbar />
      <div className="flex min-h-0 flex-1">
        <LeftToolbar />
        <div className="flex min-w-0 flex-1 flex-col">
          <Ribbon />
          <main className="flex min-h-0 flex-1">
            <div className="flex w-[25px] shrink-0 flex-col items-center pt-[3px]">
              <div className="h-[3px] w-full shrink-0 border-y border-dotted border-[#888]" />
              <div className="flex w-full flex-1 flex-col items-center justify-end border-r border-[#222] bg-[#2c2c2c]">
                <button type="button" aria-label="展开布局" className="flex h-3 w-[11px] items-center justify-center rounded-xs bg-[#505050]">
                  <svg width="4" height="6" aria-hidden="true"><path d="M0 0l4 3-4 3z" fill="#eee" /></svg>
                </button>
                <button type="button" aria-label="视口布局" className="mt-[7px] mb-1 flex h-7 w-full items-center justify-center border-b-4 border-[#3f83d6] bg-[#4d6f9c]">
                  <span className="size-[17px] border border-[#3d5068] bg-[#5b6b80]" />
                </button>
              </div>
            </div>
            <SceneExplorer />
            <Viewport />
            <CommandPanel />
          </main>
          <Timeline />
        </div>
      </div>
      <StatusBar />
      <Watermark />
    </div>
  );
}
